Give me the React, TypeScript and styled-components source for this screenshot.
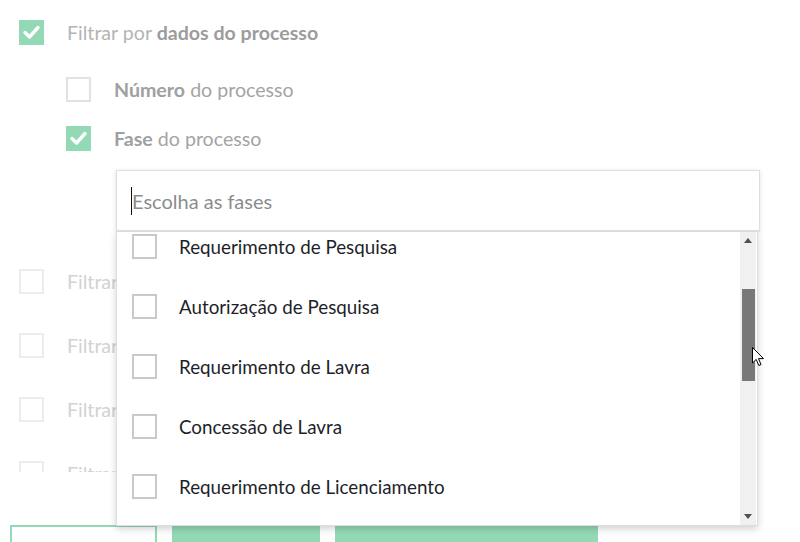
import React, { useEffect, useRef } from 'react';
import styled, { createGlobalStyle } from 'styled-components';

const GREEN = '#94d9b6';

const Global = createGlobalStyle`
  html, body { margin: 0; padding: 0; background: #fff; }
  body { font-family: Lato, "Open Sans", sans-serif; overflow: hidden; }
  * { box-sizing: border-box; }
`;

const Page = styled.div`
  position: relative;
  width: 800px;
  height: 542px;
  overflow: hidden;
  background: #fff;
`;

const Filters = styled.div`
  display: flex;
  flex-direction: column;
  padding: 20px 0 0 19px;
`;

const Row = styled.div`
  display: flex;
  align-items: center;
  gap: 23px;
  height: 25px;
  font-size: 19.6px;
  white-space: nowrap;
`;

const Box = styled.span<{ $checked?: boolean; $faded?: boolean }>`
  flex: none;
  width: 25px;
  height: 25px;
  display: flex;
  align-items: center;
  justify-content: center;
  background: ${(p) => (p.$checked ? GREEN : '#fff')};
  border: ${(p) => (p.$checked ? 'none' : `2px solid ${p.$faded ? '#ececec' : '#e2e2e2'}`)};
`;

const Light = styled.span<{ $tone: string }>`
  color: ${(p) => p.$tone};
  font-weight: 400;
`;

const Strong = styled.span<{ $tone: string }>`
  color: ${(p) => p.$tone};
  font-weight: 700;
`;

const SubList = styled.div`
  display: flex;
  flex-direction: column;
  gap: 24px;
  margin-top: 32px;
  padding-left: 47px;
`;

const SelectWrap = styled.div`
  position: relative;
  margin: 19px 0 0 97px;
  width: 644px;
  z-index: 2;
`;

const SearchBox = styled.div`
  display: flex;
  align-items: center;
  height: 62px;
  padding-left: 14px;
  background: #fff;
  border: 1px solid #dedede;
  border-bottom: 2px solid #e2e2e2;
  box-shadow: 0 1px 5px rgba(0, 0, 0, 0.12);
`;

const Caret = styled.span`
  width: 1px;
  height: 28px;
  background: #111;
  flex: none;
`;

const Placeholder = styled.span`
  font-size: 20px;
  color: #8c8c8c;
`;

const Popup = styled.div`
  position: absolute;
  top: 100%;
  left: 0;
  width: 642px;
  height: 294px;
  display: flex;
  background: #fff;
  border: 1px solid #dedede;
  border-top: none;
  box-shadow: 0 3px 7px rgba(0, 0, 0, 0.18);
`;

const Options = styled.div`
  flex: 1;
  overflow: hidden;
`;

const Option = styled.div`
  display: flex;
  align-items: center;
  gap: 22px;
  height: 60px;
  padding-left: 15px;
  font-size: 18.8px;
  color: #1e1f2a;
  white-space: nowrap;
`;

const OptBox = styled.span`
  flex: none;
  width: 25px;
  height: 25px;
  border: 2px solid #c9c9c9;
  background: #fff;
`;

const ScrollBar = styled.div`
  flex: none;
  width: 16px;
  display: flex;
  flex-direction: column;
  background: #f0f0f0;
  margin-right: 1px;
`;

const Arrow = styled.div`
  height: 17px;
  display: flex;
  align-items: center;
  justify-content: center;
  flex: none;
`;

const Track = styled.div`
  position: relative;
  flex: 1;
`;

const Thumb = styled.div`
  position: absolute;
  left: 2px;
  right: 1px;
  background: #787878;
`;

const Faded = styled.div`
  display: flex;
  flex-direction: column;
  gap: 39px;
  margin-top: 37px;
  height: 203px;
  overflow: hidden;
`;

const Buttons = styled.div`
  display: flex;
  gap: 15px;
  padding-left: 10px;
  margin-top: 53px;
`;

const Button = styled.div<{ $outline?: boolean; $w: number }>`
  width: ${(p) => p.$w}px;
  height: 40px;
  flex: none;
  background: ${(p) => (p.$outline ? '#fff' : GREEN)};
  border: ${(p) => (p.$outline ? `2px solid ${GREEN}` : 'none')};
`;

const Cursor = styled.svg`
  position: absolute;
  left: 752px;
  top: 347px;
  z-index: 5;
`;

const Check = () => (
  <svg width="25" height="25" viewBox="0 0 25 25">
    <polyline
      points="6,12.5 10.5,17 19,7.5"
      fill="none"
      stroke="#fff"
      strokeWidth="3.4"
      strokeLinecap="round"
      strokeLinejoin="round"
    />
  </svg>
);

const options = [
  'Disponibilidade',
  'Requerimento de Registro de Extração',
  'Requerimento de Pesquisa',
  'Autorização de Pesquisa',
  'Requerimento de Lavra',
  'Concessão de Lavra',
  'Requerimento de Licenciamento',
  'Licenciamento',
  'Requerimento de Lavra Garimpeira',
  'Lavra Garimpeira',
  'Registro de Extração',
  'Direito de Requerer a Lavra',
  'Apto para Disponibilidade',
  'Dado não cadastrado',
];

const ITEM_H = 60;
const SCROLL_TOP = 136;
const VIEW_H = 294;

export default function App() {
  const listRef = useRef<HTMLDivElement>(null);
  useEffect(() => {
    if (listRef.current) listRef.current.scrollTop = SCROLL_TOP;
  }, []);

  const total = options.length * ITEM_H;
  const trackH = VIEW_H - 34;
  const thumbH = Math.round((VIEW_H / total) * trackH) + 1;
  const thumbTop = Math.round((SCROLL_TOP / total) * trackH) - 2;

  return (
    <Page>
      <Global />
      <Filters>
        <Row>
          <Box $checked>
            <Check />
          </Box>
          <span>
            <Light $tone="#b4b4b4">Filtrar por </Light>
            <Strong $tone="#9c9c9c">dados do processo</Strong>
          </span>
        </Row>
        <SubList>
          <Row>
            <Box />
            <span>
              <Strong $tone="#a0a0a0">Número</Strong>
              <Light $tone="#a4a4a4"> do processo</Light>
            </span>
          </Row>
          <Row>
            <Box $checked>
              <Check />
            </Box>
            <span>
              <Strong $tone="#a0a0a0">Fase</Strong>
              <Light $tone="#a4a4a4"> do processo</Light>
            </span>
          </Row>
        </SubList>

        <SelectWrap>
          <SearchBox>
            <Caret />
            <Placeholder>Escolha as fases</Placeholder>
          </SearchBox>
          <Popup>
            <Options ref={listRef}>
              {options.map((o) => (
                <Option key={o}>
                  <OptBox />
                  <span>{o}</span>
                </Option>
              ))}
            </Options>
            <ScrollBar>
              <Arrow>
                <svg width="8" height="5" viewBox="0 0 8 5">
                  <polygon points="0,5 4,0 8,5" fill="#505050" />
                </svg>
              </Arrow>
              <Track>
                <Thumb style={{ top: thumbTop, height: thumbH }} />
              </Track>
              <Arrow>
                <svg width="8" height="5" viewBox="0 0 8 5">
                  <polygon points="0,0 8,0 4,5" fill="#505050" />
                </svg>
              </Arrow>
            </ScrollBar>
          </Popup>
        </SelectWrap>

        <Faded>
          {['Filtrar por substância', 'Filtrar por titular', 'Filtrar por município', 'Filtrar por área'].map((t) => (
            <Row key={t}>
              <Box $faded />
              <Light $tone="#d2d2d2">{t}</Light>
            </Row>
          ))}
        </Faded>
      </Filters>
      <Buttons>
        <Button $outline $w={147} />
        <Button $w={148} />
        <Button $w={263} />
      </Buttons>
      <Cursor width="13" height="20" viewBox="0 0 13 20">
        <path d="M0.5 0.5 L0.5 16 L4.2 12.4 L6.8 18.5 L9 17.6 L6.5 11.6 L11.5 11.6 Z" fill="#fff" stroke="#000" strokeWidth="1" strokeLinejoin="miter" />
      </Cursor>
    </Page>
  );
}
